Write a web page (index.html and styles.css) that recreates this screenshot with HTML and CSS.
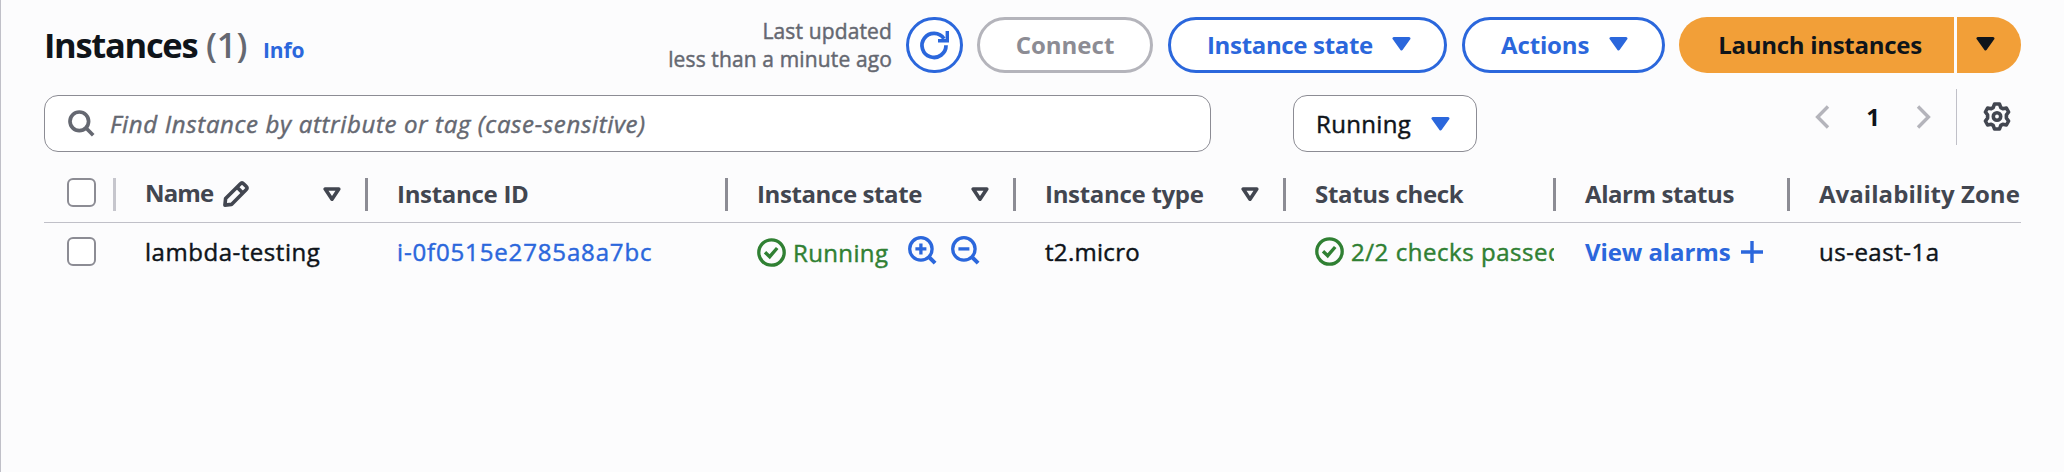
FILE: index.html
```
<!DOCTYPE html>
<html lang="en">
<head>
<meta charset="utf-8">
<title>Instances</title>
<link rel="stylesheet" href="styles.css">
</head>
<body>
<svg class="defs" aria-hidden="true">
  <symbol id="caret" viewBox="0 0 19 14"><path d="M2 1.5h15L9.5 12z" fill="currentColor" stroke="currentColor" stroke-width="3" stroke-linejoin="round"/></symbol>
  <symbol id="sort" viewBox="0 0 18 15"><path d="M2.2 2h13.6L9 12.2z" fill="none" stroke="currentColor" stroke-width="3.6" stroke-linejoin="round"/></symbol>
  <symbol id="ok" viewBox="0 0 29 29"><g fill="none" stroke="currentColor" stroke-width="3.3"><circle cx="14.5" cy="14.5" r="12.7"/><path d="M8 14.2l4.7 4.5 7.5-8.7" stroke-width="3.4"/></g></symbol>
</svg>
<main class="panel">
  <header class="top">
    <h1 class="title"><span class="title-text">Instances</span><span class="count">(1)</span><a class="info">Info</a></h1>
    <p class="updated">Last updated<br>less than a minute ago</p>
    <button class="btn refresh" aria-label="Refresh"><svg width="32" height="32" viewBox="0 0 32 32"><g fill="none" stroke="currentColor" stroke-width="3.8"><path d="M28 16.3A12 12 0 1 1 26 9.8"/><path d="M29.3 2v9.7H20" stroke-width="3.4"/></g></svg></button>
    <button class="btn connect">Connect</button>
    <button class="btn state"><span>Instance state</span><svg class="caret"><use href="#caret"/></svg></button>
    <button class="btn actions"><span>Actions</span><svg class="caret"><use href="#caret"/></svg></button>
    <div class="launch">
      <button class="launch-main">Launch instances</button>
      <button class="launch-more" aria-label="More"><svg class="caret"><use href="#caret"/></svg></button>
    </div>
  </header>

  <section class="filters">
    <div class="search">
      <svg width="27" height="27" viewBox="0 0 27 27"><g fill="none" stroke="currentColor" stroke-width="3.7"><circle cx="11.3" cy="11.3" r="9.3"/><path d="M17.8 17.8l7.4 7.4"/></g></svg>
      <span class="placeholder">Find Instance by attribute or tag (case-sensitive)</span>
    </div>
    <div class="select"><span>Running</span><svg class="caret"><use href="#caret"/></svg></div>
    <nav class="pager">
      <svg class="chevron" width="15" height="24" viewBox="0 0 15 24"><path d="M13 1.5L2.6 12 13 22.5" fill="none" stroke="currentColor" stroke-width="3.4"/></svg>
      <span class="page">1</span>
      <svg class="chevron" width="15" height="24" viewBox="0 0 15 24"><path d="M2 1.5L12.4 12 2 22.5" fill="none" stroke="currentColor" stroke-width="3.4"/></svg>
      <span class="gear"><svg width="30" height="31" viewBox="0 0 30 31"><g fill="none" stroke="currentColor" stroke-width="3.6" stroke-linejoin="round"><path d="M12.5 3h5l1.3 3.6 2 1.1 3.6-.7 2.2 4-2.2 2.9v3.2l2.2 2.9-2.2 4-3.6-.7-2 1.1-1.3 3.6h-5l-1.3-3.6-2-1.1-3.6.7-2.2-4 2.2-2.9v-3.2L3.4 11l2.2-4 3.6.7 2-1.1z"/><circle cx="15" cy="15.5" r="3.7"/></g></svg></span>
    </nav>
  </section>

  <section class="table">
    <div class="row head">
      <div class="cell check"><span class="box"></span></div>
      <div class="cell"><span class="h-name">Name</span><svg class="pencil" width="26" height="26" viewBox="0 0 26 26"><g fill="none" stroke="currentColor" stroke-width="3.6" stroke-linejoin="round"><path d="M1.9 24.1l.7-6.6L17.2 2.9q1.8-1.8 3.6 0l2.3 2.3q1.8 1.8 0 3.6L8.5 23.4z"/><path d="M14 6.2l5.8 5.8"/></g></svg><svg class="sort"><use href="#sort"/></svg></div>
      <div class="cell"><span class="h-id">Instance ID</span></div>
      <div class="cell"><span class="h-state">Instance state</span><svg class="sort"><use href="#sort"/></svg></div>
      <div class="cell"><span class="h-type">Instance type</span><svg class="sort"><use href="#sort"/></svg></div>
      <div class="cell"><span class="h-check">Status check</span></div>
      <div class="cell"><span class="h-alarm">Alarm status</span></div>
      <div class="cell last"><span class="h-zone">Availability Zone</span></div>
    </div>
    <div class="row body">
      <div class="cell check"><span class="box"></span></div>
      <div class="cell"><span class="v-name">lambda-testing</span></div>
      <div class="cell"><a class="v-id">i-0f0515e2785a8a7bc</a></div>
      <div class="cell running"><svg class="ok"><use href="#ok"/></svg><span class="v-state">Running</span>
        <svg class="zoom" width="29" height="29" viewBox="0 0 29 29"><g fill="none" stroke="currentColor" stroke-width="3.3"><circle cx="12.9" cy="12.9" r="11.2"/><path d="M20.8 20.8l6.3 6.3" stroke-width="4"/><path d="M7.4 12.9h11M12.9 7.4v11"/></g></svg>
        <svg class="zoom" width="29" height="29" viewBox="0 0 29 29"><g fill="none" stroke="currentColor" stroke-width="3.3"><circle cx="12.9" cy="12.9" r="11.2"/><path d="M20.8 20.8l6.3 6.3" stroke-width="4"/><path d="M7.4 12.9h11"/></g></svg>
      </div>
      <div class="cell"><span class="v-type">t2.micro</span></div>
      <div class="cell status"><svg class="ok"><use href="#ok"/></svg><span class="v-check">2/2 checks passed</span></div>
      <div class="cell"><a class="v-alarm">View alarms</a><svg class="plus" width="22" height="22" viewBox="0 0 22 22"><path d="M0 11h22M11 0v22" stroke="currentColor" stroke-width="3.4"/></svg></div>
      <div class="cell"><span class="v-zone">us-east-1a</span></div>
    </div>
  </section>
</main>
</body>
</html>
```
FILE: styles.css
```
* { box-sizing: border-box; }
body {
  margin: 0;
  background: #fcfcfd;
  color: #0f141a;
  font: 24px/32px "Open Sans", "Noto Sans", sans-serif;
}
.defs { display: none; }
svg { flex: none; display: block; }
.panel {
  height: 472px;
  padding: 17px 43px 0;
  border-left: 1px solid #c0c0c8;
  overflow: hidden;
}
.caret { width: 19px; height: 14px; }
.sort { width: 18px; height: 15px; margin-left: auto; }
.updated, .placeholder, .select span, .body span, .v-id { -webkit-text-stroke: .45px currentColor; }

/* header */
.top { display: flex; height: 56px; align-items: center; }
.title { display: flex; align-items: baseline; margin: 5px 0 0; font-size: 34.5px; line-height: 56px; font-weight: 700; }
.title-text { width: 162px; letter-spacing: -1.3px; white-space: nowrap; }
.count { width: 57px; color: #656871; font-weight: 600; letter-spacing: -.1px; }
.info { color: #2b67dc; font-size: 21px; font-weight: 700; letter-spacing: -.1px; }
.updated { margin: 0 14px 0 auto; text-align: right; color: #656871; font-size: 21px; line-height: 28px; letter-spacing: .13px; }
.btn {
  display: flex; align-items: center; justify-content: center;
  height: 56px; padding: 0; border: 3px solid #2b67dc; border-radius: 28px;
  background: #fff; color: #2b67dc; font: inherit; font-weight: 700;
}
.refresh { width: 57px; margin-right: 14px; }
.refresh svg { position: relative; left: -.5px; top: -.5px; }
.connect { width: 176px; margin-right: 15px; border-color: #b4b4bb; color: #8c8c94; }
.state { width: 279px; margin-right: 15px; letter-spacing: -.33px; justify-content: space-between; padding: 0 33px 0 36px; }
.actions { width: 203px; margin-right: 14px; letter-spacing: -.13px; justify-content: space-between; padding: 0 34px 0 36px; }
.launch { display: flex; gap: 3px; height: 56px; }
.launch button { border: 0; padding: 0; background: #f29f38; color: #0f141a; font: inherit; font-weight: 700; letter-spacing: -.28px; }
.launch .launch-main { width: 275px; padding-left: 7px; border-radius: 28px 0 0 28px; }
.launch .launch-more { display: flex; align-items: center; width: 64px; padding-left: 19px; border-radius: 0 28px 28px 0; }
.btn .caret, .launch .caret { margin-bottom: 2px; }

/* filters */
.filters { display: flex; height: 57px; margin-top: 22px; }
.search, .select { display: flex; align-items: center; background: #fff; border: 1px solid #8c8c94; border-radius: 14px; }
.search { width: 1167px; padding-left: 23px; color: #656871; }
.placeholder { margin-left: 15px; font-style: italic; letter-spacing: .65px; }
.select { width: 184px; margin-left: 82px; padding: 0 26px 0 22px; justify-content: space-between; letter-spacing: .35px; }
.select .caret { color: #2b67dc; }
.pager { display: flex; align-items: center; height: 56px; margin: -6px 0 0 auto; }
.chevron { color: #b4b4bb; }
.page { width: 86px; text-align: center; font-weight: 700; }
.pager svg { margin-bottom: 1px; }
.gear { display: flex; align-items: center; height: 56px; margin-left: 25px; padding: 0 9px 0 25px; border-left: 1px solid #c0c0c8; color: #424650; }

/* table */
.table { margin-top: 14px; }
.row { display: grid; grid-template-columns: 72px 252px 360px 288px 270px 270px 234px 231px; }
.head { height: 57px; border-bottom: 1px solid #c0c0c8; color: #424650; font-weight: 700; }
.body { height: 57px; }
.cell { display: flex; align-items: center; min-width: 0; padding-left: 29px; white-space: nowrap; }
.head .cell {
  padding-right: 27px;
  background: linear-gradient(#8c8c94, #8c8c94) right 12px / 3px 33px no-repeat;
}
.head .check { background: linear-gradient(#c6c6cd, #c6c6cd) right 12px / 3px 33px no-repeat; }
.head .last { background: none; padding-right: 0; }
.row .check { padding: 0 0 0 23px; }
.box { width: 29px; height: 29px; border: 2px solid #8c8c94; border-radius: 6px; background: #fff; }
.head .box { margin-bottom: 3px; }
.h-name { letter-spacing: -.86px; margin-top: -2px; }
.pencil { margin-left: 10px; }
.h-id, .h-type, .h-check { letter-spacing: -.3px; }
.h-state { letter-spacing: -.4px; }
.h-alarm { letter-spacing: -.43px; }
.h-zone { letter-spacing: .05px; }
.v-name { letter-spacing: .53px; }
.v-id { letter-spacing: .85px; color: #2b67dc; }
.running, .status { color: #308033; }
.ok { width: 29px; height: 29px; margin-right: 7px; }
.running .ok, .v-state { position: relative; top: 1px; }
.v-state { width: 115px; letter-spacing: .36px; }
.zoom { color: #2b67dc; margin-right: 14px; margin-bottom: 2px; }
.v-type { letter-spacing: .3px; }
.row .status { overflow: hidden; margin-right: 2px; }
.v-check { letter-spacing: .55px; }
.v-alarm { width: 156px; letter-spacing: -.1px; color: #2b67dc; font-weight: 700; }
.plus { color: #2b67dc; }
.v-zone { letter-spacing: .5px; }
```
